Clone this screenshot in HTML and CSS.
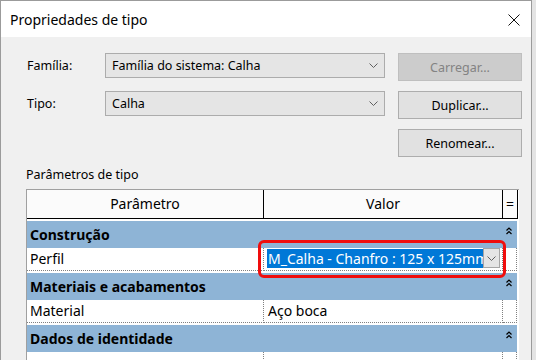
FILE: index.html
```html
<!DOCTYPE html>
<html lang="pt">

<head>
    <meta charset="UTF-8">
    <meta name="viewport" content="width=device-width, initial-scale=1.0">
    <title>Propriedades de tipo</title>
    <link rel="stylesheet" href="styles.css">
</head>

<body>
    <div class="window">
        <!-- Title bar -->
        <div class="titlebar">
            <span class="title">Propriedades de tipo</span>
            <svg class="close" width="12" height="12" viewBox="0 0 12 12">
                <path d="M0.5 0.5 L11.5 11.5 M11.5 0.5 L0.5 11.5" stroke="#111" stroke-width="1" fill="none"/>
            </svg>
        </div>

        <!-- Family / type selection -->
        <div class="form">
            <label class="form-label">Família:</label>
            <div class="combo">
                <span>Família do sistema: Calha</span>
                <svg class="chevron" width="9" height="5" viewBox="0 0 9 5"><path d="M0.5 0.5 L4.5 4.5 L8.5 0.5" stroke="#606060" fill="none"/></svg>
            </div>
            <button class="btn" disabled>Carregar...</button>

            <label class="form-label">Tipo:</label>
            <div class="combo">
                <span>Calha</span>
                <svg class="chevron" width="9" height="5" viewBox="0 0 9 5"><path d="M0.5 0.5 L4.5 4.5 L8.5 0.5" stroke="#606060" fill="none"/></svg>
            </div>
            <button class="btn">Duplicar...</button>

            <button class="btn btn-rename">Renomear...</button>
        </div>

        <div class="section-title">Parâmetros de tipo</div>

        <!-- Parameter grid -->
        <div class="grid">
            <div class="grid-row header">
                <div class="hcell">Parâmetro</div>
                <div class="hcell">Valor</div>
                <div class="hcell">=</div>
            </div>

            <div class="group">
                <span>Construção</span>
                <svg class="collapse" width="6" height="8" viewBox="0 0 6 8"><path d="M0.5 3.5 L3 1 L5.5 3.5 M0.5 7 L3 4.5 L5.5 7" stroke="#000" stroke-width="1.2" fill="none"/></svg>
            </div>
            <div class="grid-row data">
                <div class="cell">Perfil</div>
                <div class="cell value editing">
                    <span class="selected">M_Calha - Chanfro : 125 x 125mm</span>
                    <span class="drop-btn">
                        <svg width="9" height="5" viewBox="0 0 9 5"><path d="M0.5 0.5 L4.5 4.5 L8.5 0.5" stroke="#606060" fill="none"/></svg>
                    </span>
                    <div class="highlight"></div>
                </div>
                <div class="cell eq"></div>
            </div>

            <div class="group">
                <span>Materiais e acabamentos</span>
                <svg class="collapse" width="6" height="8" viewBox="0 0 6 8"><path d="M0.5 3.5 L3 1 L5.5 3.5 M0.5 7 L3 4.5 L5.5 7" stroke="#000" stroke-width="1.2" fill="none"/></svg>
            </div>
            <div class="grid-row data">
                <div class="cell">Material</div>
                <div class="cell value">Aço boca</div>
                <div class="cell eq"></div>
            </div>

            <div class="group">
                <span>Dados de identidade</span>
                <svg class="collapse" width="6" height="8" viewBox="0 0 6 8"><path d="M0.5 3.5 L3 1 L5.5 3.5 M0.5 7 L3 4.5 L5.5 7" stroke="#000" stroke-width="1.2" fill="none"/></svg>
            </div>
            <div class="grid-row data">
                <div class="cell"></div>
                <div class="cell value"></div>
                <div class="cell eq"></div>
            </div>
        </div>
    </div>
</body>

</html>
```

FILE: styles.css
```css
/* General */
html {
    background-color: #e4e4e4;
}

body {
    margin: 0;
    height: 360px;
    overflow: hidden;
    font-family: "Noto Sans", sans-serif;
    color: #000;
}

/* Window frame */
.window {
    width: 530px;
    height: 420px;
    border: 1px solid #9b9b9b;
    background-color: #f0f0f0;
}

.titlebar {
    height: 36px;
    background-color: #fff;
    display: flex;
    align-items: center;
    justify-content: space-between;
    padding: 1px 11px 0 9px;
    box-sizing: border-box;
}

.title {
    font-size: 14px;
}

/* Form */
.form {
    display: grid;
    grid-template-columns: 65px 280px 124px;
    grid-auto-rows: 28px;
    column-gap: 13px;
    row-gap: 10px;
    padding: 16px 0 0 26px;
    font-size: 12.5px;
}

.form-label {
    height: 25px;
    display: flex;
    align-items: center;
}

.combo {
    height: 25px;
    display: flex;
    align-items: center;
    justify-content: space-between;
    padding: 0 6px 0 6px;
    background-color: #e5e5e5;
    border: 1px solid #acacac;
    box-sizing: border-box;
}

.btn {
    font-family: inherit;
    font-size: 12.5px;
    color: #000;
    background-color: #e1e1e1;
    border: 1px solid #adadad;
    padding: 0;
}

.btn:disabled {
    background-color: #cccccc;
    border-color: #bfbfbf;
    color: #838383;
}

.btn-rename {
    grid-column: 3;
}

.section-title {
    font-size: 12.5px;
    line-height: 17px;
    margin: 9px 0 6px 25px;
}

/* Parameter grid */
.grid {
    margin-left: 25px;
    width: 492px;
    height: 200px;
    background-color: #fff;
    border-top: 1px solid #a0a0a0;
    border-left: 1px solid #a0a0a0;
    font-size: 14px;
}

.grid-row {
    display: grid;
    grid-template-columns: 237px 239px 15px;
}

.hcell {
    height: 29px;
    line-height: 28px;
    text-align: center;
    border-right: 1px solid #000;
    border-bottom: 1px solid #000;
    box-sizing: border-box;
    background-color: #fbfbfb;
}

.header {
    margin-bottom: 2px;
}

.group {
    width: 490px;
    height: 27px;
    display: flex;
    align-items: center;
    justify-content: space-between;
    padding-left: 3px;
    box-sizing: border-box;
    background-color: #8eb4d6;
    font-weight: bold;
}

.collapse {
    align-self: flex-start;
    margin: 6px 5px 0 0;
}

.data {
    margin-bottom: 2px;
}

.cell {
    height: 23px;
    line-height: 22px;
    padding-left: 3px;
    border-right: 1px dotted #808080;
    border-bottom: 1px dotted #808080;
    box-sizing: border-box;
    white-space: nowrap;
}

.cell.value {
    padding-left: 4px;
}

.cell.eq {
    width: 14px;
}

/* Inline editor */
.editing {
    position: relative;
    display: flex;
    align-items: flex-start;
    padding: 1px 0 0 3px !important;
}

.selected {
    width: 216px;
    height: 19px;
    line-height: 19px;
    overflow: hidden;
    background-color: #0078d7;
    color: #fff;
    padding-left: 1px;
    box-sizing: border-box;
}

.drop-btn {
    width: 17px;
    height: 20px;
    margin-top: -1px;
    display: flex;
    align-items: center;
    justify-content: center;
    background-color: #e5e5e5;
    border: 1px solid #a6a6a6;
    box-sizing: border-box;
}

.highlight {
    position: absolute;
    left: -6px;
    top: -8px;
    width: 248px;
    height: 38px;
    border: 3px solid #f00d0d;
    border-radius: 6px;
    box-sizing: border-box;
}
```
